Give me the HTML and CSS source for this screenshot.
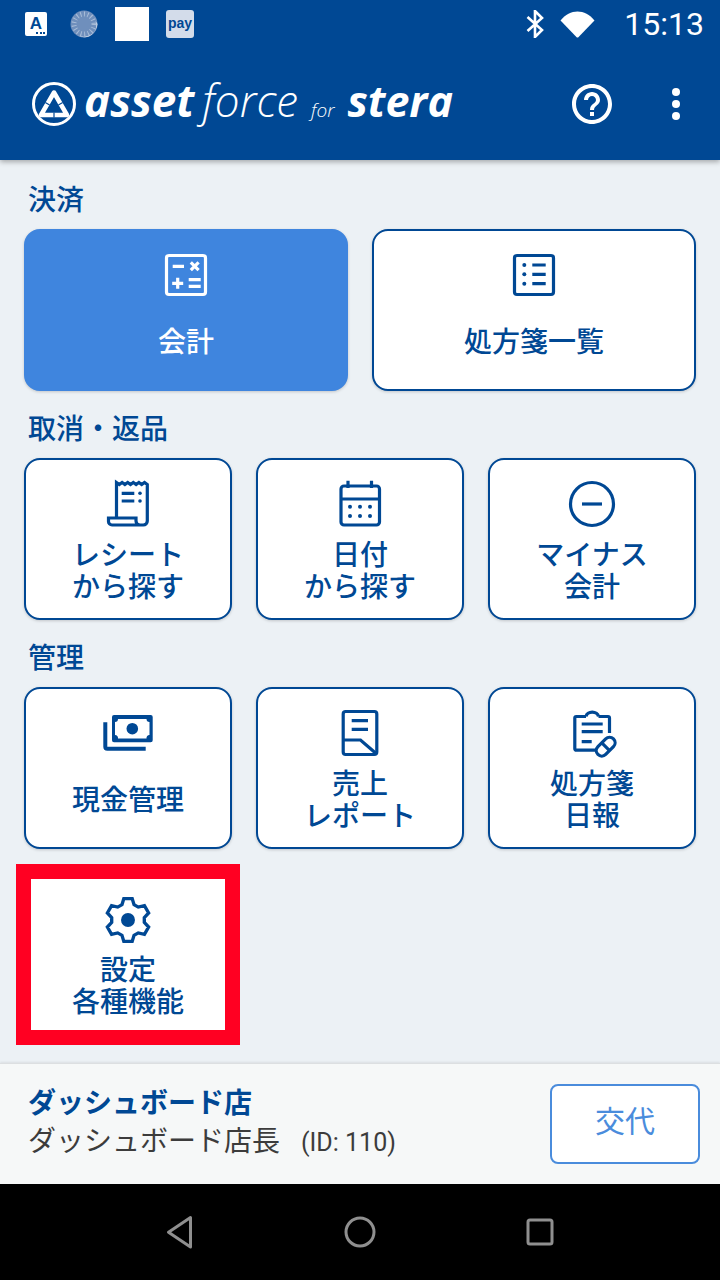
FILE: index.html
```html
<!DOCTYPE html>
<html lang="ja">
<head>
<meta charset="utf-8">
<title>asset force for stera</title>
<link rel="stylesheet" href="styles.css">
</head>
<body>
<div class="page">
  <header class="header">
    <div class="status">
      <div class="status-left">
        <div class="note-a"><span class="note-a-letter">A</span><span class="note-a-dots"></span></div>
        <svg class="st-sync" viewBox="0 0 28 28" width="28" height="28">
          <circle cx="14" cy="14" r="13.5" fill="#6f8fbc"/>
          <path d="M25.5 11 A12 12 0 0 1 8 25.5 A14 14 0 0 0 27.5 14 Z" fill="#dbe4f0"/>
          <circle cx="14" cy="14" r="10" fill="none" stroke="#a9bdd8" stroke-width="5" stroke-dasharray="1 2.6"/>
        </svg>
        <div class="st-blank"></div>
        <div class="st-pay">pay</div>
      </div>
      <div class="status-right">
        <svg class="st-bt" viewBox="0 0 18 28" width="18" height="28"><path d="M1.5 7 L16 20 L9 27 V1 L16 8 L1.5 21" fill="none" stroke="#fff" stroke-width="2.6"/></svg>
        <svg class="st-wifi" viewBox="0 0 35 27" width="35" height="27"><path d="M0.5 9.5 C10 -2.5 25 -2.5 34.5 9.5 L18.6 26 Q17.5 27 16.4 26 Z" fill="#fff"/></svg>
        <span class="st-time">15:13</span>
      </div>
    </div>
    <div class="appbar">
      <div class="brand">
        <svg class="brand-mark" viewBox="0 0 44 44" width="44" height="44">
          <circle cx="22" cy="22" r="20.500" fill="none" stroke="#fff" stroke-width="3"/>
          <path d="M22 10.500 L35 33 H9 Z" fill="none" stroke="#fff" stroke-width="4.500" stroke-linejoin="round"/>
          <path d="M22 30.500V35.500M13.300 20.500L17.600 23M30.700 20.500L26.400 23" fill="none" stroke="#004894" stroke-width="1.200"/>
        </svg>
        <div class="brand-words">
          <span class="brand-asset">asset</span>
          <span class="brand-force">force</span>
          <span class="brand-for">for</span>
          <span class="brand-stera">stera</span>
        </div>
      </div>
      <div class="actions">
        <svg viewBox="0 0 24 24" width="48" height="48" fill="#fff"><path d="M11 18h2v-2h-2v2zm1-16C6.48 2 2 6.48 2 12s4.48 10 10 10 10-4.48 10-10S17.52 2 12 2zm0 18c-4.41 0-8-3.59-8-8s3.59-8 8-8 8 3.59 8 8-3.59 8-8 8zm0-14c-2.21 0-4 1.79-4 4h2c0-1.1.9-2 2-2s2 .9 2 2c0 2-3 1.75-3 5h2c0-2.25 3-2.5 3-5 0-2.21-1.79-4-4-4z"/></svg>
        <svg viewBox="0 0 24 24" width="48" height="48" fill="#fff"><circle cx="12" cy="6" r="2"/><circle cx="12" cy="12" r="2"/><circle cx="12" cy="18" r="2"/></svg>
      </div>
    </div>
  </header>

  <main class="main">
    <section class="section">
      <h2 class="section-title">決済</h2>
      <div class="grid grid-2">
        <div class="card card-primary">
          <svg class="icon" viewBox="0 0 56 56">
            <rect x="8.500" y="8.500" width="39" height="39" rx="2.500"/>
            <path d="M14.700 19.300H26M32.800 15.400l7.800 7.800M40.600 15.400L32.800 23.200M19.700 30.800v11M14.200 36.300h11M30.700 32.700h12M30.700 39.300h12"/>
          </svg>
          <div class="card-label">会計</div>
        </div>
        <div class="card">
          <svg class="icon" viewBox="0 0 56 56">
            <rect x="8.500" y="8.500" width="39" height="39" rx="2.500"/>
            <path d="M26.300 18H39.700M26.300 27.300H39.700M26.300 36.700H39.700"/>
            <circle class="dot" cx="18.300" cy="18" r="2"/><circle class="dot" cx="18.300" cy="27.300" r="2"/><circle class="dot" cx="18.300" cy="36.700" r="2"/>
          </svg>
          <div class="card-label">処方箋一覧</div>
        </div>
      </div>
    </section>

    <section class="section">
      <h2 class="section-title">取消・返品</h2>
      <div class="grid grid-3">
        <div class="card">
          <svg class="icon" viewBox="0 0 56 56">
            <path d="M16.500 41V6.500l2.800 2 2.800-2 2.800 2 2.800-2 2.800 2 2.800-2 2.800 2 2.800-2 2.800 2 2.800-2 2.800 2V45a4 4 0 0 1-4 4H12a3.500 3.500 0 0 1-3.500-3.500V42H36v3a4 4 0 0 0 4 4"/>
            <path d="M21.700 17.300H34.300M21.700 25H34.300"/>
            <circle class="dot" cx="40" cy="17.300" r="1.800"/><circle class="dot" cx="40" cy="25" r="1.800"/>
          </svg>
          <div class="card-label">レシート<br>から探す</div>
        </div>
        <div class="card">
          <svg class="icon" viewBox="0 0 56 56">
            <rect x="9" y="10" width="38.500" height="39" rx="3"/>
            <path d="M9 23H47.500M16 4.700V12M39.500 4.700V12"/>
            <circle class="dot" cx="18" cy="30.700" r="2"/><circle class="dot" cx="28" cy="30.700" r="2"/><circle class="dot" cx="38" cy="30.700" r="2"/>
            <circle class="dot" cx="18" cy="40" r="2"/><circle class="dot" cx="28" cy="40" r="2"/><circle class="dot" cx="38" cy="40" r="2"/>
          </svg>
          <div class="card-label">日付<br>から探す</div>
        </div>
        <div class="card">
          <svg class="icon" viewBox="0 0 56 56">
            <circle cx="28" cy="28" r="21.500"/>
            <path d="M18 28H38"/>
          </svg>
          <div class="card-label">マイナス<br>会計</div>
        </div>
      </div>
    </section>

    <section class="section">
      <h2 class="section-title">管理</h2>
      <div class="grid grid-3">
        <div class="card">
          <svg class="icon" viewBox="0 0 56 56">
            <path class="solid" fill-rule="evenodd" d="M14 10H50.700a2 2 0 0 1 2 2V35.300a2 2 0 0 1-2 2H14a2 2 0 0 1-2-2V12a2 2 0 0 1 2-2zM18 14a3 3 0 0 1-3 3V30a3 3 0 0 1 3 3.500H46.500a3 3 0 0 1 3-3.500V17a3 3 0 0 1-3-3z"/>
            <circle class="dot" cx="32.300" cy="23.700" r="5.800"/>
            <path class="thick" d="M5.300 17.300V41.700a2 2 0 0 0 2 2H45.700"/>
          </svg>
          <div class="card-label">現金管理</div>
        </div>
        <div class="card">
          <svg class="icon" viewBox="0 0 56 56">
            <rect x="11.200" y="6.500" width="33.600" height="43" rx="2.500"/>
            <path d="M19.700 15.700H36M19.700 24.300H36M11.500 35H28.500L43.500 48"/>
          </svg>
          <div class="card-label">売上<br>レポート</div>
        </div>
        <div class="card">
          <svg class="icon" viewBox="0 0 56 56">
            <path d="M45.500 28V13a1.500 1.500 0 0 0-1.500-1.500H34.500M22 11.500H12.300a1.500 1.500 0 0 0-1.500 1.500V43.700a1.500 1.500 0 0 0 1.500 1.500H32"/>
            <path d="M22 11.500a6.300 5 0 0 1 12.500 0"/>
            <path d="M17.700 19H38.700M17.700 26.700H38.700M17.700 36.700H27.700"/>
            <g transform="translate(41.700 41.700) rotate(-45)">
              <rect x="-11" y="-5.500" width="22" height="11" rx="5.500"/>
              <path d="M0 -5.500V5.500"/>
            </g>
          </svg>
          <div class="card-label">処方箋<br>日報</div>
        </div>
      </div>
    </section>

    <div class="grid grid-3 settings-row">
      <div class="card card-flagged">
        <svg class="icon icon-gear" viewBox="0 0 56 56">
          <g transform="translate(28 28) scale(.93)">
            <polygon points="-6.500,-16.500 -4.500,-23 4.500,-23 6.500,-16.500 11.040,-13.880 17.670,-15.400 22.170,-7.600 17.540,-2.620 17.540,2.620 22.170,7.600 17.670,15.400 11.040,13.880 6.500,16.500 4.500,23 -4.500,23 -6.500,16.500 -11.040,13.880 -17.670,15.400 -22.170,7.600 -17.540,2.620 -17.540,-2.620 -22.170,-7.600 -17.670,-15.400 -11.040,-13.880"/>
            <circle class="dot" cx="0" cy="0" r="7.500"/>
          </g>
        </svg>
        <div class="card-label">設定<br>各種機能</div>
      </div>
    </div>
  </main>

  <footer class="footer">
    <div class="user">
      <div class="user-shop">ダッシュボード店</div>
      <div class="user-name">ダッシュボード店長<span class="user-id">(ID: 110)</span></div>
    </div>
    <div class="swap">交代</div>
  </footer>

  <nav class="nav">
    <svg viewBox="0 0 56 56" width="56" height="56"><path d="M38.500 13.500V43L16.500 28.200Z"/></svg>
    <svg viewBox="0 0 56 56" width="56" height="56"><circle cx="28" cy="28" r="14"/></svg>
    <svg viewBox="0 0 56 56" width="56" height="56"><rect x="16" y="16" width="24" height="24" rx="2"/></svg>
  </nav>
</div>
</body>
</html>
```

FILE: styles.css
```css
* { box-sizing: border-box; }

html, body { margin: 0; padding: 0; }

body {
  font-family: "Noto Sans CJK JP", "Noto Sans", sans-serif;
  color: #004894;
}

.page {
  width: 720px;
  height: 1280px;
  display: flex;
  flex-direction: column;
  overflow: hidden;
  background: #ecf1f5;
}

/* header */
.header {
  height: 160px;
  flex: none;
  background: #004894;
  box-shadow: 0 2px 5px rgba(0, 0, 0, .3);
  position: relative;
  z-index: 1;
}

.status {
  height: 48px;
  display: flex;
  align-items: center;
  justify-content: space-between;
  padding: 0 16px 0 25px;
}

.status-left { display: flex; align-items: center; }

.note-a {
  width: 22px;
  height: 24px;
  background: #fff;
  border-radius: 2px;
  display: flex;
  flex-direction: column;
  align-items: center;
  color: #004894;
}

.note-a-letter {
  font: 700 17px/20px "Liberation Sans", sans-serif;
  padding-top: 2px;
  height: 20px;
}

.note-a-dots {
  width: 9px;
  height: 2px;
  align-self: flex-end;
  margin-right: 2px;
  background: repeating-linear-gradient(90deg, #004894 0 2px, transparent 2px 3.5px);
}

.st-sync { margin-left: 23px; }

.st-blank {
  width: 34px;
  height: 34px;
  background: #fff;
  margin-left: 17px;
}

.st-pay {
  width: 28px;
  height: 28px;
  margin-left: 17px;
  background: #d3dcea;
  border-radius: 3px;
  font: 700 14px/26px "Liberation Sans", sans-serif;
  text-align: center;
  color: #004894;
}

.status-right { display: flex; align-items: center; }

.st-wifi { margin-left: 16px; }

.st-time {
  margin-left: 29px;
  font: 400 32px/48px Roboto, sans-serif;
  color: #fff;
}

.appbar {
  height: 112px;
  display: flex;
  align-items: center;
  justify-content: space-between;
  padding: 0 20px 0 32px;
}

.brand {
  display: flex;
  align-items: center;
  color: #fff;
}

.brand-mark { margin-right: 8px; flex: none; }

.brand-words {
  display: flex;
  align-items: baseline;
  margin-bottom: 9px;
  font-family: "Open Sans", sans-serif;
  font-style: italic;
}

.brand-asset { font-size: 44px; font-weight: 700; }

.brand-force { font-size: 44px; font-weight: 300; margin-left: 8px; }

.brand-for { font-size: 19px; font-weight: 300; margin-left: 13px; }

.brand-stera { font-size: 43px; font-weight: 700; margin-left: 13px; }

.actions { display: flex; gap: 36px; }

/* main */
.main {
  flex: 1;
  padding: 22px 24px 0;
}

.section { margin-bottom: 20px; }

.section-title {
  margin: 0 0 15px 4px;
  font-size: 28px;
  line-height: 32px;
  font-weight: 500;
}

.grid { display: grid; gap: 24px; }

.grid-2 { grid-template-columns: repeat(2, 324px); }

.grid-3 { grid-template-columns: repeat(3, 208px); }

.card {
  border: 2px solid #004894;
  border-radius: 16px;
  background: #fff;
  padding: 16px 0;
  display: flex;
  flex-direction: column;
  align-items: center;
  box-shadow: 0 1px 3px rgba(0, 0, 0, .18);
}

.card-primary {
  background: #3f85de;
  border-color: #3f85de;
  color: #fff;
}

.card-label {
  height: 64px;
  margin-top: 6px;
  padding-bottom: 2px;
  display: flex;
  align-items: center;
  justify-content: center;
  text-align: center;
  font-size: 28px;
  line-height: 32px;
  font-weight: 500;
}

.icon {
  width: 56px;
  height: 56px;
  flex: none;
  fill: none;
  stroke: currentColor;
  stroke-width: 3.2;
}

.icon .dot { fill: currentColor; stroke: none; }

.icon .solid { fill: currentColor; stroke: none; }

.icon .thick { stroke-width: 4; }

.icon-gear { stroke-width: 3.6; }

.settings-row { margin-top: 23px; }

.card-flagged {
  position: relative;
  border-color: #fff;
  box-shadow: none;
  padding: 18px 0 15px;
}

.card-flagged .card-label { margin-top: 5px; }

.card-flagged::after {
  content: "";
  position: absolute;
  top: -10px;
  left: -10px;
  right: -10px;
  bottom: -13px;
  border: 15px solid #ff0022;
}

/* footer */
.footer {
  height: 121px;
  flex: none;
  background: #f6f8f8;
  border-top: 1px solid #dcdfe1;
  box-shadow: 0 -1px 2px rgba(0, 0, 0, .08);
  display: flex;
  align-items: center;
  justify-content: space-between;
  padding: 0 20px 0 28px;
}

.user { padding-bottom: 4px; }

.user-shop {
  font-size: 28px;
  line-height: 38px;
  font-weight: 700;
}

.user-name {
  font-size: 28px;
  line-height: 38px;
  color: #3c3c3c;
  display: flex;
  align-items: baseline;
}

.user-id {
  margin-left: 21px;
  font: 400 25px/38px Roboto, sans-serif;
}

.swap {
  width: 150px;
  height: 80px;
  background: #fff;
  border: 2px solid #4a8cdc;
  border-radius: 8px;
  color: #4a8cdc;
  font-size: 30px;
  line-height: 66px;
  text-align: center;
}

/* navigation */
.nav {
  height: 96px;
  flex: none;
  background: #000;
  display: grid;
  grid-template-columns: repeat(3, 180px);
  justify-content: center;
  justify-items: center;
  align-items: center;
}

.nav svg {
  fill: none;
  stroke: #8f8f8f;
  stroke-width: 3;
  stroke-linejoin: round;
}
```
